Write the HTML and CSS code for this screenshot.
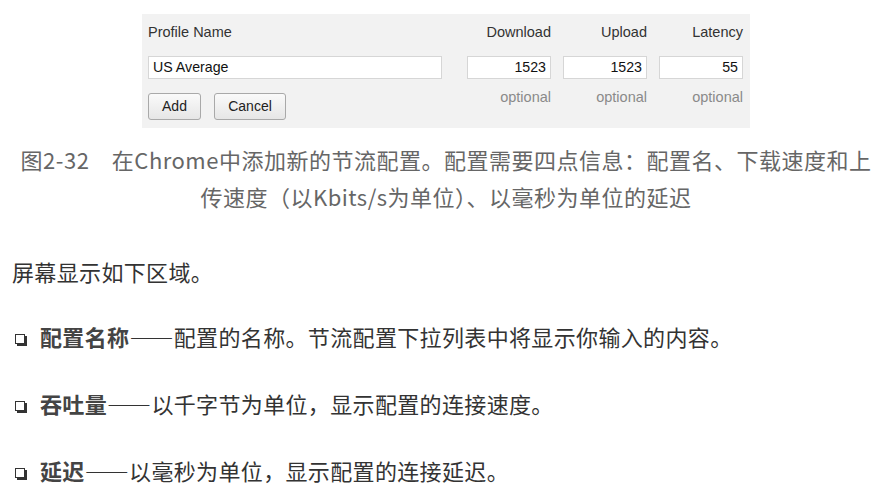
FILE: index.html
```html
<!DOCTYPE html>
<html lang="zh-CN">
<head>
<meta charset="utf-8">
<title>节流配置</title>
<link rel="stylesheet" href="styles.css">
</head>
<body>
<div class="panel">
  <div class="grid">
    <div class="hdr left">Profile Name</div>
    <div class="hdr">Download</div>
    <div class="hdr">Upload</div>
    <div class="hdr">Latency</div>

    <div class="field name">US Average</div>
    <div class="field num">1523</div>
    <div class="field num">1523</div>
    <div class="field num">55</div>

    <div class="buttons">
      <span class="btn add">Add</span>
      <span class="btn cancel">Cancel</span>
    </div>
    <div class="opt">optional</div>
    <div class="opt">optional</div>
    <div class="opt">optional</div>
  </div>
</div>

<p class="caption">图2-32　在Chrome中添加新的节流配置。配置需要四点信息：配置名、下载速度和上<br>传速度（以Kbits/s为单位）、以毫秒为单位的延迟</p>

<p class="para first">屏幕显示如下区域。</p>
<p class="para item"><span class="box"></span><b>配置名称</b>——配置的名称。节流配置下拉列表中将显示你输入的内容。</p>
<p class="para item"><span class="box"></span><b>吞吐量</b>——以千字节为单位，显示配置的连接速度。</p>
<p class="para item"><span class="box"></span><b>延迟</b>——以毫秒为单位，显示配置的连接延迟。</p>
</body>
</html>
```

FILE: styles.css
```css
html, body {
  margin: 0;
  padding: 0;
  background: #ffffff;
}

body {
  width: 892px;
  height: 490px;
  overflow: hidden;
  font-family: "Noto Sans CJK SC", "Noto Sans", sans-serif;
}

.panel {
  margin-left: 142px;
  width: 608px;
  height: 114px;
  margin-top: 14px;
  box-sizing: border-box;
  padding: 10px 0 0 6px;
  background: #f2f2f2;
  font-family: "Liberation Sans", Arial, sans-serif;
  font-size: 14.5px;
  color: #222;
}

.grid {
  display: grid;
  grid-template-columns: 307px 84px 84px 84px;
  grid-template-rows: 16px 23px 28px;
  column-gap: 12px;
  row-gap: 0;
}

.hdr {
  line-height: 16px;
  text-align: right;
  color: #333;
}

.hdr.left {
  text-align: left;
}

.field {
  margin-top: 16px;
  height: 23px;
  box-sizing: border-box;
  border: 1px solid #d6d6d6;
  background: #fff;
  line-height: 21px;
  padding: 0 4px;
  font-size: 14.2px;
  color: #111;
}

.field.name {
  width: 294px;
}

.field.num {
  text-align: right;
}

.buttons {
  display: flex;
  gap: 13px;
  margin-top: 30px;
}

.btn {
  box-sizing: border-box;
  height: 27px;
  line-height: 25px;
  text-align: center;
  border: 1px solid #a9a9a9;
  border-radius: 3px;
  background: linear-gradient(#fafafa, #e6e6e6);
  color: #222;
  font-size: 14px;
}

.btn.add {
  width: 53px;
}

.btn.cancel {
  width: 72px;
}

.opt {
  margin-top: 26px;
  line-height: 16px;
  text-align: right;
  color: #8a8a8a;
}

.caption {
  margin: 13px 0 0;
  text-align: center;
  font-size: 22px;
  line-height: 37px;
  letter-spacing: 0.5px;
  color: #666;
}

.para {
  margin: 0 0 0 12px;
  font-size: 22px;
  line-height: 30px;
  letter-spacing: 0.35px;
  color: #333;
}

.para.first {
  margin-top: 41px;
}

.para.item {
  margin-top: 35px;
}

.para.item + .para.item {
  margin-top: 37px;
}

.para b {
  color: #444;
  font-weight: bold;
}

.box {
  display: inline-block;
  width: 10px;
  height: 10px;
  box-sizing: border-box;
  border: 1.5px solid #333;
  box-shadow: 2px 2px 0 #333;
  margin: 0 15px 0 3px;
  vertical-align: 2px;
}
```
